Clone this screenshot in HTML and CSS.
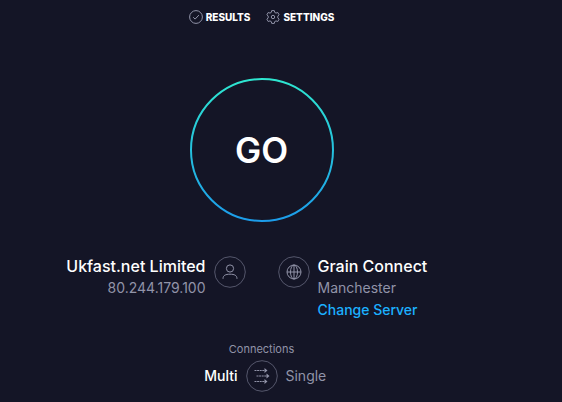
FILE: index.html
```html
<!DOCTYPE html>
<html lang="en">
<head>
<meta charset="utf-8">
<meta name="viewport" content="width=device-width, initial-scale=1">
<title>Speed test</title>
<link rel="stylesheet" href="styles.css">
</head>
<body>
<nav class="nav">
  <a class="nav-link" href="#results">
    <svg class="nav-icon" viewBox="0 0 14 14"><circle cx="7" cy="7" r="6.4"/><path d="M4.200 7.200l1.900 1.900 3.800-4"/></svg>
    Results
  </a>
  <a class="nav-link" href="#settings">
    <svg class="nav-icon" viewBox="0 0 14 14"><path d="M5.7.6h2.6l.4 1.8 1.300.7 1.800-.6 1.300 2.300-1.300 1.300v1.800l1.300 1.300-1.300 2.300-1.800-.6-1.300.7-.4 1.800H5.700l-.4-1.800-1.300-.7-1.800.6L.9 9.200l1.300-1.300V6.100L.9 4.800l1.300-2.300 1.800.6 1.300-.7z"/><circle cx="7" cy="7" r="1.700"/></svg>
    Settings
  </a>
</nav>
<main class="main">
  <button class="go" type="button">
    <svg class="go-ring" viewBox="0 0 144 144" aria-hidden="true">
      <defs><linearGradient id="ring" x1="0" y1="0" x2="0" y2="1"><stop offset="0" stop-color="#2ee6d0"/><stop offset="1" stop-color="#1c9cea"/></linearGradient></defs>
      <circle cx="72" cy="72" r="71" fill="none" stroke="url(#ring)" stroke-width="2"/>
    </svg>
    <span class="go-label">GO</span>
  </button>
  <section class="hosts">
    <div class="host host-client">
      <div class="host-text">
        <div class="host-name">Ukfast.net Limited</div>
        <div class="host-detail">80.244.179.100</div>
      </div>
      <svg class="badge" viewBox="0 0 32 32"><circle class="badge-ring" cx="16" cy="16" r="15.3"/><circle cx="16" cy="12.500" r="3.600"/><path d="M9 22.800c0-3.400 2.400-4.600 7-4.600s7 1.200 7 4.600"/></svg>
    </div>
    <div class="host">
      <svg class="badge" viewBox="0 0 32 32"><circle class="badge-ring" cx="16" cy="16" r="15.3"/><circle cx="16" cy="16" r="7"/><ellipse cx="16" cy="16" rx="3.500" ry="7"/><path d="M16 9v14M9 16h14"/></svg>
      <div class="host-text">
        <div class="host-name">Grain Connect</div>
        <div class="host-detail">Manchester</div>
        <a class="host-link" href="#servers">Change Server</a>
      </div>
    </div>
  </section>
  <section class="connections">
    <div class="connections-title" id="connections-title">Connections</div>
    <div class="modes" role="group" aria-labelledby="connections-title">
      <button class="mode mode-multi mode-active" type="button">Multi</button>
      <button class="toggle" type="button" aria-label="Switch connection mode">
        <svg class="badge" viewBox="0 0 32 32"><circle class="badge-ring" cx="16" cy="16" r="15.3"/><path stroke-dasharray="2 .6" d="M8.500 10.500h11M10.500 16h11M8.500 21.500h11"/><path class="arrowhead" d="M18.500 8l3 2.500-3 2.500zM20.500 13.500l3 2.500-3 2.500zM18.500 19l3 2.500-3 2.500z"/></svg>
      </button>
      <button class="mode" type="button">Single</button>
    </div>
  </section>
</main>
</body>
</html>
```
FILE: styles.css
```css
* { box-sizing: border-box; }

body {
  margin: 0;
  padding: 8px 39px 8px 0;
  background: #141526;
  color: #fff;
  font-family: Inter, "Liberation Sans", sans-serif;
}

a { text-decoration: none; }

button {
  padding: 0;
  border: 0;
  background: none;
  color: inherit;
  font: inherit;
  cursor: pointer;
}

svg {
  display: block;
  flex: none;
  fill: none;
  stroke: #9193a8;
}

.nav {
  display: flex;
  justify-content: center;
  gap: 16px;
}

.nav-link {
  display: flex;
  align-items: center;
  gap: 3px;
  color: #fff;
  font-size: 10px;
  font-weight: 800;
  line-height: 18px;
  text-transform: uppercase;
}

.nav-icon { width: 14px; height: 14px; }

.main {
  display: flex;
  flex-direction: column;
  align-items: center;
  padding-top: 52px;
}

.go {
  display: grid;
  place-items: center;
  border-radius: 50%;
}

.go-ring,
.go-label { grid-area: 1 / 1; }

.go-ring { width: 144px; height: 144px; }

.go-label {
  font-size: 35px;
  font-weight: 600;
}

.hosts {
  display: grid;
  grid-template-columns: 1fr 1fr;
  gap: 32px;
  width: 100%;
  margin-top: 33px;
}

.host {
  display: flex;
  align-items: flex-start;
  gap: 8px;
}

.host-client {
  justify-content: flex-end;
  text-align: right;
}

.badge { width: 32px; height: 32px; }

.host .badge { margin-top: 1px; }

.badge-ring { stroke: #55576c; }

.arrowhead {
  fill: #9193a8;
  stroke: none;
}

.host-name {
  font-size: 16px;
  font-weight: 500;
  line-height: 22px;
}

.host-detail,
.host-link {
  display: block;
  font-size: 14px;
  line-height: 22px;
}

.host-detail { color: #9193a8; }

.host-link {
  color: #1cb0ff;
  font-weight: 500;
}

.connections {
  width: 100%;
  margin-top: 20px;
}

.connections-title {
  color: #9193a8;
  font-size: 11px;
  line-height: 16px;
  text-align: center;
}

.modes {
  display: grid;
  grid-template-columns: 1fr auto 1fr;
  align-items: center;
  gap: 8px;
  margin-top: 3px;
}

.mode {
  justify-self: start;
  color: #9193a8;
  font-size: 14px;
  line-height: 22px;
}

.mode-multi { justify-self: end; }

.mode-active {
  color: #fff;
  font-weight: 500;
}
```
